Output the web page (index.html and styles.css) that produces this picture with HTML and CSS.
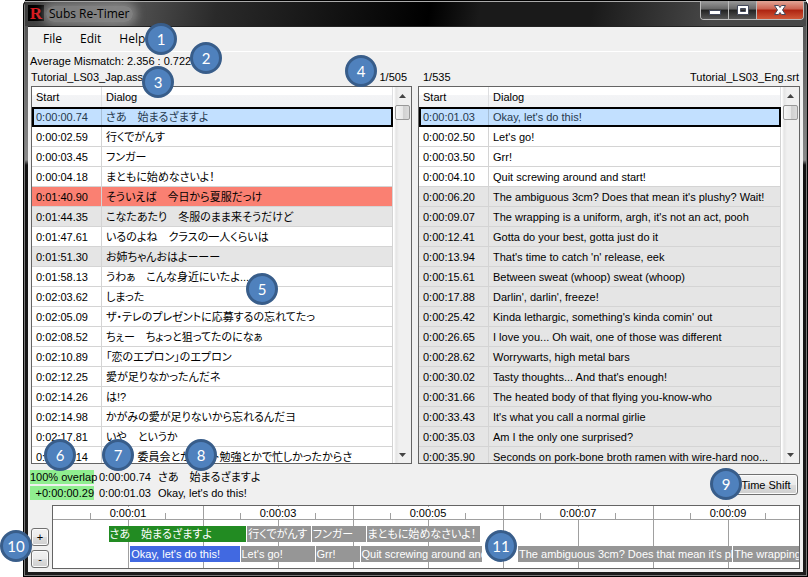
FILE: index.html
```html
<!DOCTYPE html>
<html lang="en">
<head>
<meta charset="utf-8">
<title>Subs Re-Timer</title>
<link rel="stylesheet" href="styles.css">
</head>
<body>
<div class="window">
  <header class="titlebar">
    <span class="app-icon" aria-hidden="true">R</span>
    <h1 class="title">Subs Re-Timer</h1>
    <div class="caption-buttons">
      <button class="caption" aria-label="Minimize"><svg viewBox="0 0 12 12"><rect x=".5" y="6.500" width="11" height="4" fill="#fff" stroke="#444a5c"/></svg></button>
      <button class="caption" aria-label="Maximize"><svg viewBox="0 0 12 12"><path d="M.5 1.500h11v9H.5z M3.500 4.500v3h5v-3z" fill="#fff" fill-rule="evenodd" stroke="#444a5c"/></svg></button>
      <button class="caption close" aria-label="Close"><svg viewBox="0 0 12 12"><path d="M.5 1.500h4L6 3.500l1.500-2h4L8.500 6l3 4.500h-4L6 8.500l-1.500 2h-4l3-4.500z" fill="#fff" stroke="#444a5c"/></svg></button>
    </div>
  </header>
  <div class="client">
    <nav class="menu">
      <button>File</button><button>Edit</button><button>Help</button>
    </nav>
    <p class="mismatch">Average Mismatch: 2.356 : 0.722</p>
    <main class="lists">
      <section class="panel">
        <div class="file-line"><span>Tutorial_LS03_Jap.ass</span><span>1/505</span></div>
        <div class="list">
          <div class="view">
            <table>
              <thead><tr><th class="start">Start</th><th>Dialog</th></tr></thead>
              <tbody lang="ja">
                <tr class="selected"><td>0:00:00.74</td><td>さあ　始まるざますよ</td></tr>
                <tr><td>0:00:02.59</td><td>行くでがんす</td></tr>
                <tr><td>0:00:03.45</td><td>フンガー</td></tr>
                <tr><td>0:00:04.18</td><td>まともに始めなさいよ！</td></tr>
                <tr class="bad"><td>0:01:40.90</td><td>そういえば　今日から夏服だっけ</td></tr>
                <tr class="dim"><td>0:01:44.35</td><td>こなたあたり　冬服のまま来そうだけど</td></tr>
                <tr><td>0:01:47.61</td><td>いるのよね　クラスの一人くらいは</td></tr>
                <tr class="dim"><td>0:01:51.30</td><td>お姉ちゃんおはよーーー</td></tr>
                <tr><td>0:01:58.13</td><td>うわぁ　こんな身近にいたよ...</td></tr>
                <tr><td>0:02:03.62</td><td>しまった</td></tr>
                <tr><td>0:02:05.09</td><td>ザ・テレのプレゼントに応募するの忘れてたっ</td></tr>
                <tr><td>0:02:08.52</td><td>ちぇー　ちょっと狙ってたのになぁ</td></tr>
                <tr><td>0:02:10.89</td><td>「恋のエプロン」のエプロン</td></tr>
                <tr><td>0:02:12.25</td><td>愛が足りなかったんだネ</td></tr>
                <tr><td>0:02:14.26</td><td>は!?</td></tr>
                <tr><td>0:02:14.98</td><td>かがみの愛が足りないから忘れるんだヨ</td></tr>
                <tr><td>0:02:17.81</td><td>いや　というか</td></tr>
                <tr><td>0:02:19.14</td><td>ほら　委員会とかバイト勉強とかで忙しかったからさ</td></tr>
              </tbody>
            </table>
          </div>
          <div class="scrollbar"><i class="arrow up"></i><i class="thumb"></i><i class="arrow down"></i></div>
        </div>
      </section>
      <section class="panel">
        <div class="file-line"><span class="count">1/535</span><span>Tutorial_LS03_Eng.srt</span></div>
        <div class="list">
          <div class="view">
            <table>
              <thead><tr><th class="start">Start</th><th>Dialog</th></tr></thead>
              <tbody>
                <tr class="selected"><td>0:00:01.03</td><td>Okay, let's do this!</td></tr>
                <tr><td>0:00:02.50</td><td>Let's go!</td></tr>
                <tr><td>0:00:03.50</td><td>Grr!</td></tr>
                <tr><td>0:00:04.10</td><td>Quit screwing around and start!</td></tr>
                <tr class="dim"><td>0:00:06.20</td><td>The ambiguous 3cm? Does that mean it's plushy? Wait!</td></tr>
                <tr class="dim"><td>0:00:09.07</td><td>The wrapping is a uniform, argh, it's not an act, pooh</td></tr>
                <tr class="dim"><td>0:00:12.41</td><td>Gotta do your best, gotta just do it</td></tr>
                <tr class="dim"><td>0:00:13.94</td><td>That's time to catch 'n' release, eek</td></tr>
                <tr class="dim"><td>0:00:15.61</td><td>Between sweat (whoop) sweat (whoop)</td></tr>
                <tr class="dim"><td>0:00:17.88</td><td>Darlin', darlin', freeze!</td></tr>
                <tr class="dim"><td>0:00:25.42</td><td>Kinda lethargic, something's kinda comin' out</td></tr>
                <tr class="dim"><td>0:00:26.65</td><td>I love you... Oh wait, one of those was different</td></tr>
                <tr class="dim"><td>0:00:28.62</td><td>Worrywarts, high metal bars</td></tr>
                <tr class="dim"><td>0:00:30.02</td><td>Tasty thoughts... And that's enough!</td></tr>
                <tr class="dim"><td>0:00:31.66</td><td>The heated body of that flying you-know-who</td></tr>
                <tr class="dim"><td>0:00:33.43</td><td>It's what you call a normal girlie</td></tr>
                <tr class="dim"><td>0:00:35.03</td><td>Am I the only one surprised?</td></tr>
                <tr class="dim"><td>0:00:35.90</td><td>Seconds on pork-bone broth ramen with wire-hard noo...</td></tr>
              </tbody>
            </table>
          </div>
          <div class="scrollbar"><i class="arrow up"></i><i class="thumb"></i><i class="arrow down"></i></div>
        </div>
      </section>
    </main>
    <div class="status">
      <div class="match">
        <span class="good">100% overlap</span><span>0:00:00.74</span><span lang="ja">さあ　始まるざますよ</span>
        <span class="good">+0:00:00.29</span><span>0:00:01.03</span><span>Okay, let's do this!</span>
      </div>
      <button class="push shift">Time Shift</button>
    </div>
    <footer class="bottom">
      <div class="zoom"><button class="push" aria-label="Zoom in">+</button><button class="push" aria-label="Zoom out">-</button></div>
      <div class="timeline">
        <div class="ruler">
          <div class="span"><span>0:00:01</span></div><div class="span"><span>0:00:03</span></div><div class="span"><span>0:00:05</span></div><div class="span"><span>0:00:07</span></div><div class="span"><span>0:00:09</span></div>
        </div>
        <div class="track" lang="ja">
          <div class="clip green" style="--from:0.74;--to:2.59">さあ　始まるざますよ</div>
          <div class="clip" style="--from:2.59;--to:3.45">行くでがんす</div>
          <div class="clip" style="--from:3.45;--to:4.18">フンガー</div>
          <div class="clip" style="--from:4.18;--to:5.70">まともに始めなさいよ！</div>
        </div>
        <div class="track">
          <div class="clip blue" style="--from:1.03;--to:2.50">Okay, let's do this!</div>
          <div class="clip" style="--from:2.50;--to:3.50">Let's go!</div>
          <div class="clip" style="--from:3.50;--to:4.10">Grr!</div>
          <div class="clip" style="--from:4.10;--to:5.73">Quit screwing around and start!</div>
          <div class="clip" style="--from:6.20;--to:9.07">The ambiguous 3cm? Does that mean it's plushy? Wait!</div>
          <div class="clip" style="--from:9.07;--to:12.41">The wrapping is a uniform, argh, it's not an act, pooh</div>
        </div>
      </div>
    </footer>
  </div>
</div>
<span class="callout c1">1</span><span class="callout c2">2</span><span class="callout c3">3</span><span class="callout c4">4</span><span class="callout c5">5</span><span class="callout c6">6</span><span class="callout c7">7</span><span class="callout c8">8</span><span class="callout c9">9</span><span class="callout c10">10</span><span class="callout c11">11</span>
</body>
</html>
```
FILE: styles.css
```css
* { box-sizing: border-box; }
body {
  margin: 0;
  position: relative;
  background: #fff;
  color: #000;
  font: 11px/14px "Liberation Sans", "Noto Sans CJK JP", sans-serif;
}
[lang="ja"] { font-feature-settings: "palt"; }
button { font: inherit; color: inherit; }
p, h1 { margin: 0; }

.window {
  display: flex;
  flex-direction: column;
  height: 100vh;
  margin-left: 23px;
  padding: 0 5px 5px;
  border-radius: 6px 6px 0 0;
  background: linear-gradient(#4a4a4a 0, #8a8a8a 160px, #111 165px, #1c1c1c);
  box-shadow: inset 0 0 0 1px #000, inset 0 0 0 2px #777;
}
.titlebar {
  display: flex;
  align-items: flex-start;
  height: 26px;
  margin: 0 -3px;
  padding: 0 2px 0 3px;
  border-top: 1px solid #000;
  box-shadow: inset 0 1px #aaa;
  background: linear-gradient(100deg, #3c3c3c 0, #5a5a5a 90px, #2a2a2a 190px, #000 400px, #1a1a1a 450px, #1a1a1a 560px, #484848 680px);
}
.app-icon {
  width: 16px;
  height: 16px;
  margin-top: 4px;
  background: #000;
  color: #d8191f;
  font: bold 17px/17px "Liberation Serif", serif;
  text-align: center;
}
.title {
  margin: 5px 0 0 2px;
  padding: 0 3px;
  border-radius: 8px;
  background: rgba(160, 160, 160, .6);
  box-shadow: 0 0 8px 4px rgba(160, 160, 160, .6);
  font: 12px/16px "Open Sans", sans-serif;
}
.caption-buttons {
  display: flex;
  margin-left: auto;
  border: 1px solid #bbb;
  border-top: 0;
  border-radius: 0 0 4px 4px;
  overflow: hidden;
}
.caption {
  width: 28px;
  height: 18px;
  padding: 0;
  border: 0;
  border-right: 1px solid #bbb;
  background: linear-gradient(#999 0, #666 45%, #222 50%, #555);
}
.caption svg { display: block; width: 12px; height: 12px; margin: 0 auto; }
.caption.close { width: 46px; border: 0; background: linear-gradient(#e3a596 0, #cc6250 45%, #ad2310 50%, #d05838); }

.client {
  display: flex;
  flex: 1;
  flex-direction: column;
  min-height: 0;
  padding: 0 3px;
  border-top: 1px solid #222;
  background: #f0f0f0;
}
.menu {
  display: flex;
  height: 25px;
  margin: 0 -3px;
  padding-left: 6px;
  border-bottom: 1px solid #fff;
}
.menu button {
  padding: 0 9px;
  border: 0;
  background: none;
  font: 12px/22px "Open Sans", sans-serif;
}
.mismatch { margin: 2px 0 0 -1px; }

.lists {
  display: grid;
  flex: 1;
  grid-template-columns: 381fr 382fr;
  gap: 6px;
  min-height: 0;
}
.panel { display: flex; flex-direction: column; min-width: 0; min-height: 0; }
.file-line { display: flex; justify-content: space-between; height: 18px; padding: 1px 5px 0 0; line-height: 16px; }
.panel + .panel .file-line { padding: 1px 1px 0 5px; }
.list { display: flex; flex: 1; min-height: 0; border: 1px solid #646464; background: #fff; }
.view { flex: 1; min-width: 0; overflow: hidden; }
table { width: 100%; border-collapse: separate; border-spacing: 0; table-layout: fixed; }
th, td {
  height: 20px;
  padding: 0 0 0 4px;
  overflow: hidden;
  border-right: 1px solid #d4d4d4;
  border-bottom: 1px solid #d4d4d4;
  font-weight: 400;
  line-height: 14px;
  text-align: left;
  white-space: nowrap;
}
th { border-bottom-color: #f1f2f4; border-right-color: #dedfe1; background: linear-gradient(#fff 40%, #f3f4f6 45%, #f1f2f4); }
.start { width: 70px; }
.dim td { background: #e5e5e5; }
.bad td { background: #fa8072; }
.selected td {
  border: 2px solid #000;
  border-width: 2px 0;
  background: #c2e0ff;
  color: #26394d;
}
.selected td:first-child { padding-left: 2px; border-left-width: 2px; box-shadow: inset -1px 0 #a6bed6; }
.selected td:last-child { border-right-width: 2px; }
.scrollbar {
  display: flex;
  flex-direction: column;
  align-items: center;
  width: 18px;
  padding: 7px 1px 6px 2px;
  background: linear-gradient(90deg, #fff 1px, #e4e4e4 3px, #f0f0f0 6px);
}
.arrow { width: 7px; height: 4px; background: #444; clip-path: polygon(50% 0, 100% 100%, 0 100%); }
.down { margin-top: auto; clip-path: polygon(0 0, 100% 0, 50% 100%); }
.thumb {
  width: 15px;
  height: 15px;
  margin-top: 7px;
  border: 1px solid #989898;
  border-radius: 2px;
  background: linear-gradient(90deg, #f6f6f6, #e8e8e8 50%, #d0d0d0 55%, #dcdcdc);
}

.status { display: flex; justify-content: space-between; align-items: flex-start; height: 41px; }
.match {
  display: grid;
  grid-template-columns: 64px 54px auto;
  grid-auto-rows: 14px;
  gap: 2px 5px;
  margin: 6px 0 0 -1px;
  white-space: nowrap;
}
.good { background: #90ee90; text-align: right; }
.push {
  padding: 0;
  border: 1px solid #707070;
  border-radius: 3px;
  background: linear-gradient(#f2f2f2 0, #ebebeb 50%, #ddd 50%, #cfcfcf);
  box-shadow: inset 0 0 0 1px #fbfbfb;
}
.shift { width: 64px; height: 21px; margin: 10px 2px 0 0; }
.bottom { display: flex; gap: 3px; padding-bottom: 3px; }
.zoom { display: flex; flex-direction: column; gap: 4px; padding-top: 23px; }
.zoom .push { width: 18px; height: 18px; line-height: 14px; }
.timeline {
  position: relative;
  flex: 1;
  height: 64px;
  overflow: hidden;
  border: 1px solid #646464;
  background: #fff;
}
.ruler { position: absolute; inset: 0; display: flex; }
.ruler::after { content: ""; position: absolute; top: 13px; left: 0; right: 0; height: 1px; background: #a0a0a0; }
.span {
  flex: none;
  width: 150px;
  text-align: center;
  background:
    linear-gradient(#a0a0a0, #a0a0a0) 37px 7px / 1px 6px no-repeat,
    linear-gradient(#a0a0a0, #a0a0a0) 112px 7px / 1px 6px no-repeat,
    linear-gradient(#a0a0a0, #a0a0a0) 75px 0 / 1px 100% no-repeat;
}
.span + .span { box-shadow: inset 1px 0 #a0a0a0; }
.span span { display: inline-block; height: 12px; margin-top: 1px; background: #fff; line-height: 13px; }
.track { position: relative; height: 16px; margin-top: 20px; }
.track + .track { margin-top: 4px; }
.clip {
  position: absolute;
  left: calc(var(--from) * 75px);
  width: calc((var(--to) - var(--from)) * 75px);
  height: 16px;
  padding-left: 1px;
  overflow: hidden;
  border-right: 1px solid #fff;
  background: #969696;
  color: #fff;
  line-height: 16px;
  white-space: nowrap;
}
.clip.green { background: #228b22; }
.clip.blue { background: #4169e1; }

.callout {
  position: absolute;
  width: 32px;
  height: 32px;
  border: 3px solid #385d8a;
  border-radius: 50%;
  background: #4f81bd;
  color: #fff;
  font: 15px/26px Lato, sans-serif;
  text-align: center;
}
.c1 { left: 145px; top: 23px; }
.c2 { left: 190px; top: 42px; }
.c3 { left: 142px; top: 66px; }
.c4 { left: 345px; top: 55px; }
.c5 { left: 246px; top: 273px; }
.c6 { left: 44px; top: 439px; }
.c7 { left: 102px; top: 439px; }
.c8 { left: 185px; top: 439px; }
.c9 { right: 66px; top: 468px; }
.c10 { left: 0; top: 530px; }
.c11 { left: 485px; top: 530px; }
```
